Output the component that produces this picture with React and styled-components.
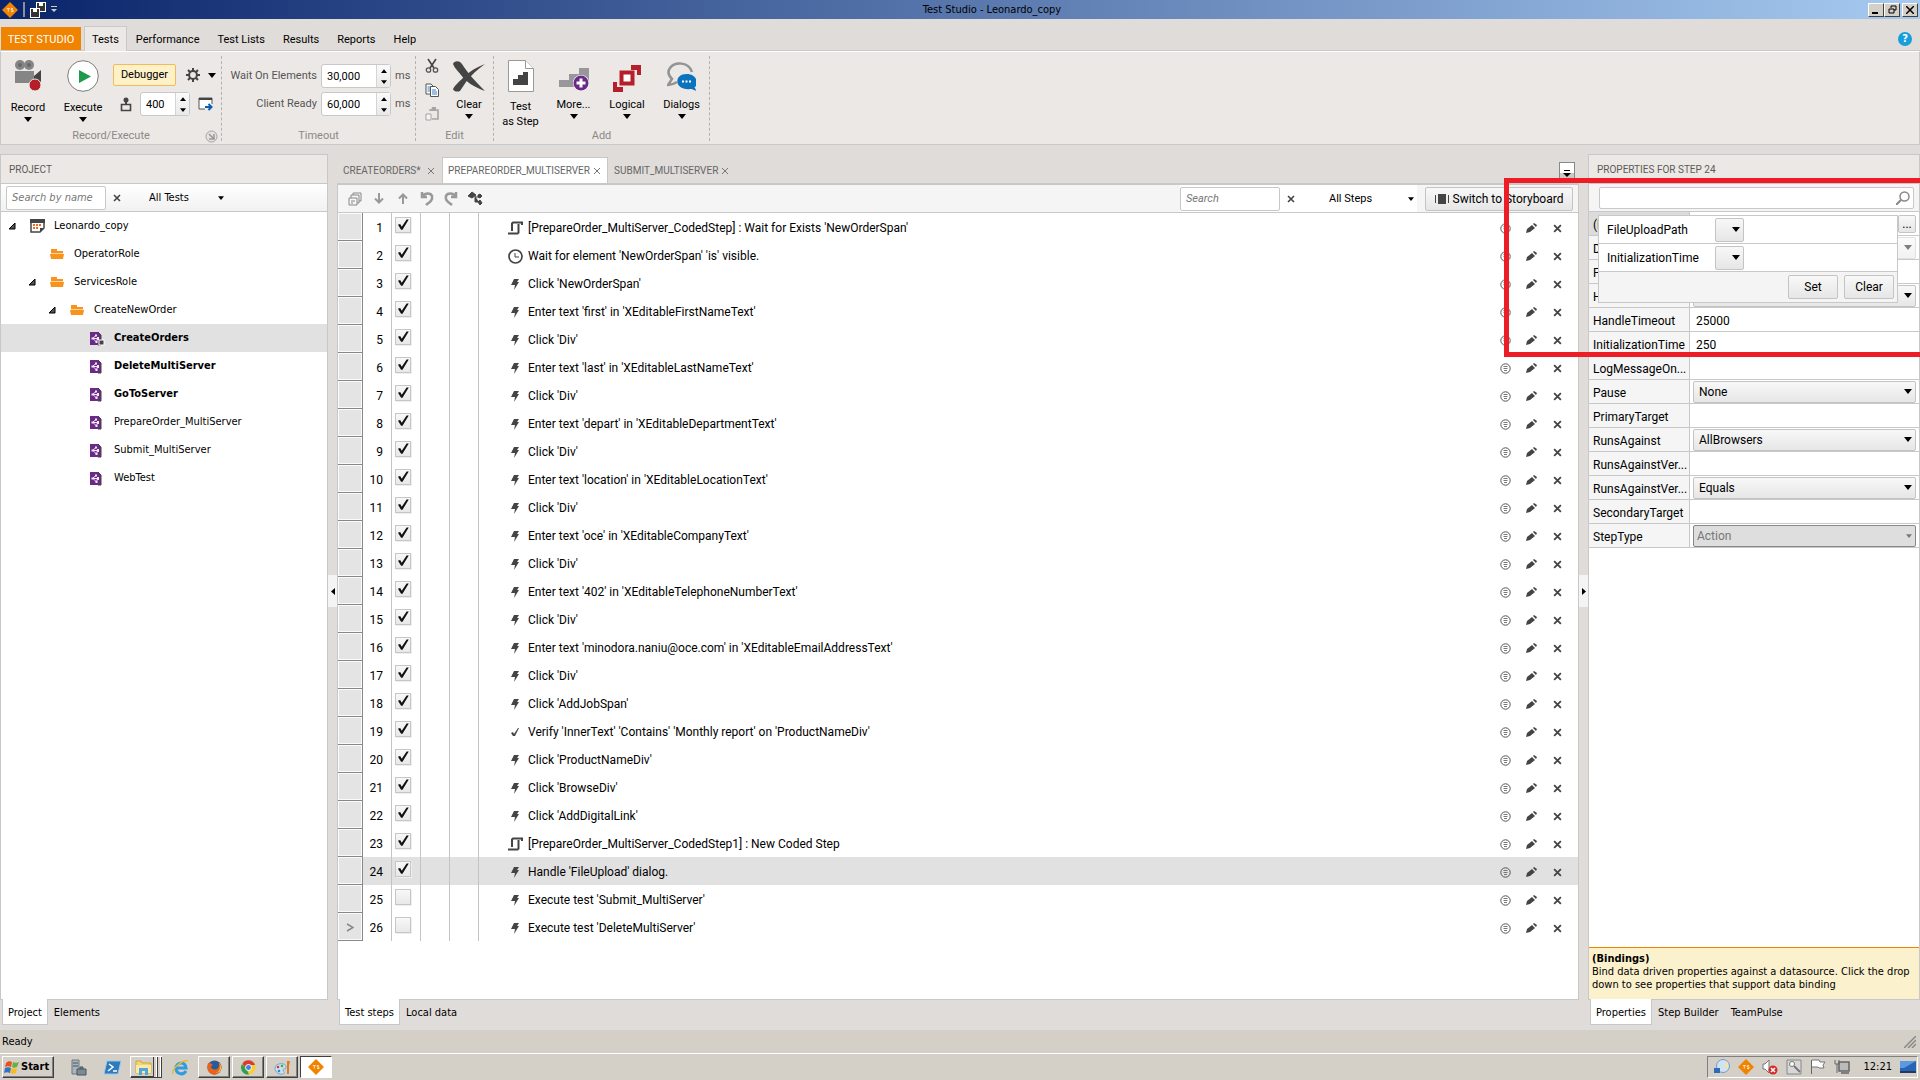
import { useState } from 'react';
import styled, { createGlobalStyle, css } from 'styled-components';

const ui = '"DejaVu Sans Condensed", "DejaVu Sans", sans-serif';
const ribbon = 'Roboto, "Open Sans", sans-serif';

const tree = [
  { name: 'Leonardo_copy', level: 0, icon: 'project', open: true },
  { name: 'OperatorRole', level: 1, icon: 'folder' },
  { name: 'ServicesRole', level: 1, icon: 'folder', open: true },
  { name: 'CreateNewOrder', level: 2, icon: 'folder', open: true },
  { name: 'CreateOrders', level: 3, icon: 'testdata', bold: true, selected: true },
  { name: 'DeleteMultiServer', level: 3, icon: 'test', bold: true },
  { name: 'GoToServer', level: 3, icon: 'test', bold: true },
  { name: 'PrepareOrder_MultiServer', level: 3, icon: 'test' },
  { name: 'Submit_MultiServer', level: 3, icon: 'test' },
  { name: 'WebTest', level: 3, icon: 'test' },
];

const steps = [
  { text: "[PrepareOrder_MultiServer_CodedStep] : Wait for Exists 'NewOrderSpan'", icon: 'code' },
  { text: "Wait for element 'NewOrderSpan' 'is' visible.", icon: 'clock' },
  { text: "Click 'NewOrderSpan'" },
  { text: "Enter text 'first' in 'XEditableFirstNameText'" },
  { text: "Click 'Div'" },
  { text: "Enter text 'last' in 'XEditableLastNameText'" },
  { text: "Click 'Div'" },
  { text: "Enter text 'depart' in 'XEditableDepartmentText'" },
  { text: "Click 'Div'" },
  { text: "Enter text 'location' in 'XEditableLocationText'" },
  { text: "Click 'Div'" },
  { text: "Enter text 'oce' in 'XEditableCompanyText'" },
  { text: "Click 'Div'" },
  { text: "Enter text '402' in 'XEditableTelephoneNumberText'" },
  { text: "Click 'Div'" },
  { text: "Enter text 'minodora.naniu@oce.com' in 'XEditableEmailAddressText'" },
  { text: "Click 'Div'" },
  { text: "Click 'AddJobSpan'" },
  { text: "Verify 'InnerText' 'Contains' 'Monthly report' on 'ProductNameDiv'", icon: 'verify' },
  { text: "Click 'ProductNameDiv'" },
  { text: "Click 'BrowseDiv'" },
  { text: "Click 'AddDigitalLink'" },
  { text: '[PrepareOrder_MultiServer_CodedStep1] : New Coded Step', icon: 'code' },
  { text: "Handle 'FileUpload' dialog.", selected: true },
  { text: "Execute test 'Submit_MultiServer'", off: true },
  { text: "Execute test 'DeleteMultiServer'", off: true, current: true },
];

const properties = [
  { name: '(Bindings)', kind: 'more', selected: true },
  { name: 'Description', kind: 'faded' },
  { name: 'FileUploadPath' },
  { name: 'HandleButton', kind: 'select', value: '' },
  { name: 'HandleTimeout', value: '25000' },
  { name: 'InitializationTime', value: '250' },
  { name: 'LogMessageOn...' },
  { name: 'Pause', kind: 'select', value: 'None' },
  { name: 'PrimaryTarget' },
  { name: 'RunsAgainst', kind: 'select', value: 'AllBrowsers' },
  { name: 'RunsAgainstVer...' },
  { name: 'RunsAgainstVer...', kind: 'select', value: 'Equals' },
  { name: 'SecondaryTarget' },
  { name: 'StepType', kind: 'disabled', value: 'Action' },
];

//GLOBAL + SHARED
const GlobalStyle = createGlobalStyle`
  * { box-sizing: border-box; }
  body { margin: 0; background: #e0dcd9; }
  button, input, select { font: inherit; color: inherit; margin: 0; }
  button { padding: 0; border: 0; background: none; }
  svg { display: block; flex: none; }
`;

const Window = styled.div`
  display: flex;
  flex-direction: column;
  min-height: 100vh;
  overflow: hidden;
  font: 11px/14px ${ui};
  color: #000;
`;

const Row = styled.div`
  display: flex;
  align-items: center;
  gap: ${(props) => props.$gap || 0}px;
`;

const raised = css`
  border: 1px solid #c4c4c4;
  border-radius: 2px;
  background: linear-gradient(#f8f8f8, #e6e6e6);
`;

//TITLE BAR
const TitleBar = styled.header`
  display: flex;
  align-items: center;
  height: 19px;
  background: linear-gradient(90deg, #0a246a, #a6caf0);
`;

const QuickAccess = styled.div`
  display: flex;
  align-items: center;
  gap: 5px;
  width: 64px;
  padding-left: 2px;
`;

const QuickLine = styled.span`
  width: 2px;
  height: 15px;
  background: #8a8f9e;
`;

const WindowTitle = styled.h1`
  flex: 1;
  margin: 0;
  padding-left: 52px;
  text-align: center;
  font: 11px/22px ${ui};
`;

const WindowButtons = styled.div`
  display: flex;
  width: 52px;
  button {
    display: grid;
    place-items: center;
    width: 16px;
    height: 14px;
    background: #d4d0c8;
    border: 1px solid;
    border-color: #fff #404040 #404040 #fff;
  }
  button:last-child { margin-left: 2px; }
`;

//RIBBON
const TabStrip = styled.nav`
  display: flex;
  align-items: flex-end;
  height: 32px;
  padding-left: 1px;
  border-bottom: 1px solid #c9c9c9;
  font: 11px/22px ${ribbon};
`;

const FileTab = styled.button`
  width: 80px;
  height: 23px;
  margin-right: 3px;
  padding-top: 2px;
  background: #f08300;
  color: #fff;
`;

const RibbonTab = styled.button`
  height: 24px;
  padding: 3px 9px 0;
  ${(props) => props.$active && css`
    height: 25px;
    margin-bottom: -1px;
    padding: 1px 7px 0;
    background: #ece8e5;
    border: 1px solid #c9c9c9;
    border-bottom: 0;
  `}
`;

const HelpButton = styled.button`
  display: grid;
  place-items: center;
  width: 14px;
  height: 14px;
  margin: 0 8px 4px auto;
  border-radius: 50%;
  background: #169fdb;
  color: #fff;
  font: bold 11px/14px ${ui};
`;

const Ribbon = styled.section`
  display: flex;
  height: 94px;
  padding: 4px 0 3px;
  background: #ece8e5;
  border: 1px solid #c9c9c9;
  border-top-color: #fff;
  font: 11px/16px ${ribbon};
`;

const Group = styled.div`
  display: flex;
  flex-direction: column;
  width: ${(props) => props.$width}px;
  border-right: 1px dashed #b4b1ae;
`;

const GroupBody = styled.div`
  display: flex;
  flex: 1;
  min-height: 0;
  gap: ${(props) => props.$gap || 0}px;
  padding-left: ${(props) => props.$left || 0}px;
`;

const GroupLabel = styled.div`
  position: relative;
  text-align: center;
  line-height: 11px;
  color: #8b8886;
`;

const Launcher = styled.button`
  position: absolute;
  right: 3px;
  top: 0;
`;

const BigButton = styled.button`
  display: flex;
  flex-direction: column;
  align-items: center;
  justify-content: flex-start;
  width: ${(props) => props.$width}px;
  padding-top: ${(props) => props.$top || 4}px;
  line-height: ${(props) => props.$line || 18}px;
  svg:first-child { margin-bottom: ${(props) => props.$space || 4}px; }
`;

const Tools = styled.div`
  display: flex;
  flex-direction: column;
  gap: ${(props) => props.$gap}px;
  padding-top: ${(props) => props.$top || 8}px;
`;

const Debugger = styled.button`
  width: 63px;
  height: 22px;
  margin: 0 10px 0 2px;
  border: 1px solid #f5b95c;
  border-radius: 2px;
  background: #fdf1c8;
`;

const SpinBox = styled.div`
  display: flex;
  width: ${(props) => props.$width}px;
  height: 24px;
  border: 1px solid #c8c8c8;
  border-radius: 3px;
  background: #fff;
  input {
    flex: 1;
    min-width: 0;
    border: 0;
    padding: 2px 5px 0;
    background: none;
    outline: 0;
  }
`;

const SpinButtons = styled.div`
  display: flex;
  flex-direction: column;
  width: 14px;
  background: linear-gradient(#fafafa, #e9e9e9);
  border-left: 1px solid #d4d4d4;
  button {
    flex: 1;
    display: grid;
    place-items: center;
  }
`;

const TimeRow = styled.div`
  display: flex;
  align-items: center;
  gap: 4px;
  color: #555;
  label { width: 91px; text-align: right; }
  input { color: #000; }
`;

//WORKSPACE
const Workspace = styled.main`
  display: grid;
  grid-template-columns: 328px minmax(0, 1fr) 332px;
  gap: 9px;
  flex: 1;
  padding-top: 9px;
`;

const Column = styled.section`
  position: relative;
  display: flex;
  flex-direction: column;
  min-width: 0;
`;

const Panel = styled.div`
  display: flex;
  flex-direction: column;
  flex: 1;
  background: #fff;
  border: 1px solid #c8c8c8;
`;

const PanelHeader = styled.h2`
  height: 29px;
  margin: 0;
  padding-left: 8px;
  background: #ece8e5;
  border-bottom: 1px solid #c8c8c8;
  font: 10px/30px ${ribbon};
  color: #5c5a58;
`;

const FilterBar = styled.div`
  display: flex;
  align-items: center;
  height: 28px;
  padding: 0 5px;
  background: ${(props) => props.$plain || 'linear-gradient(#fff, #f1f1f1)'};
  border-bottom: 1px solid #c8c8c8;
  font-family: ${(props) => (props.$ribbon ? ribbon : ui)};
`;

const SearchBox = styled.input`
  width: 100px;
  height: 24px;
  padding: 0 5px;
  border: 1px solid #c8c8c8;
  border-radius: 2px;
  background: #fff;
  outline: 0;
  &::placeholder { color: #777; opacity: 1; font-style: italic; }
`;

const ClearSearch = styled.button`
  display: grid;
  place-items: center;
  width: 22px;
  height: 22px;
`;

const Picker = styled.div`
  display: grid;
  align-items: center;
  width: ${(props) => props.$width};
  height: ${(props) => props.$height || 22}px;
  ${(props) => props.$boxed && raised}
  ${(props) => props.$disabled && css`
    background: #dedede;
    border: 1px solid #888;
    color: #777;
  `}
  opacity: ${(props) => (props.$faded ? 0.5 : 1)};
  select {
    grid-area: 1 / 1;
    width: 100%;
    height: 100%;
    padding: 0 ${(props) => props.$pad || 0}px;
    appearance: none;
    border: 0;
    background: none;
    outline: 0;
    opacity: 1;
  }
  svg {
    grid-area: 1 / 1;
    justify-self: end;
    margin-right: 3px;
    pointer-events: none;
  }
`;

const BottomTabs = styled.div`
  display: flex;
  height: 30px;
  padding-left: 2px;
`;

const BottomTab = styled.button`
  height: 25px;
  padding: 2px 5px 0;
  border: 1px solid transparent;
  border-top: 0;
  ${(props) => props.$active && css`
    position: relative;
    height: 26px;
    margin-top: -1px;
    background: #fff;
    border-color: #c8c8c8;
  `}
`;

const TreeItem = styled.div`
  display: flex;
  align-items: center;
  height: 28px;
  padding-left: ${(props) => 7 + props.$level * 20}px;
  background: ${(props) => (props.$selected ? '#e1e1e1' : 'none')};
  font-weight: ${(props) => (props.$bold ? 'bold' : 'normal')};
`;

const Expander = styled.span`
  width: 22px;
`;

const TreeIcon = styled.span`
  width: 24px;
`;

const SplitHandle = styled.button`
  position: absolute;
  top: 421px;
  ${(props) => props.$side}: -9px;
  display: grid;
  place-items: center;
  width: 9px;
  height: 32px;
  background: #f4f4f4;
`;

//DOCUMENT
const DocTabs = styled.div`
  display: flex;
  align-items: flex-end;
  height: 30px;
  border-bottom: 1px solid #c8c8c8;
  font: 10px/24px ${ribbon};
  color: #666;
`;

const DocTab = styled.button`
  display: flex;
  align-items: center;
  justify-content: space-between;
  width: ${(props) => props.$width}px;
  height: 26px;
  padding: 0 6px 0 5px;
  border: 1px solid transparent;
  border-bottom: 0;
  ${(props) => props.$active && css`
    background: #fff;
    border-color: #c8c8c8;
  `}
`;

const TabMenu = styled.button`
  display: grid;
  place-items: center;
  width: 16px;
  height: 21px;
  margin: 0 4px 0 auto;
  border: 1px solid #888;
  border-bottom: 0;
  background: linear-gradient(#fff 50%, #c9c9c9 50%);
`;

const ToolBar = styled.div`
  display: flex;
`;

const ToolIcon = styled.button`
  display: grid;
  place-items: center;
  width: 24px;
  height: 24px;
`;

const Filters = styled.div`
  display: flex;
  align-items: center;
  width: 237px;
  height: 27px;
  margin: 0 8px 0 auto;
  background: #fff;
`;

const Storyboard = styled.button`
  ${raised}
  display: flex;
  align-items: center;
  justify-content: center;
  gap: 4px;
  width: 148px;
  height: 24px;
  font: 12px/20px ${ribbon};
`;

const StepTable = styled.table`
  width: 100%;
  table-layout: fixed;
  border-spacing: 0;
  font: 12px/16px ${ribbon};
  td, th { height: 28px; padding: 2px 0 0; font-weight: normal; }
`;

const StepRow = styled.tr`
  background: ${(props) => (props.$selected ? '#e1e1e1' : 'none')};
`;

const RowHead = styled.th`
  background: #e4e4e4;
  border-right: 1px solid #888;
  border-bottom: 1px solid #888;
  box-shadow: inset 0 0 0 1px #fbfbfb;
  svg { margin: auto; }
`;

const NumberCell = styled.td`
  text-align: right;
  border-right: 1px solid #c4c4c4;
  && { padding-right: 8px; }
`;

const LineCell = styled.td`
  border-right: 1px solid #c4c4c4;
`;

const Tick = styled.input`
  display: block;
  appearance: none;
  width: 16px;
  height: 16px;
  margin: 0 0 6px 3px;
  border: 1px solid #c6c6c6;
  background: linear-gradient(#f8f8f8, #e8e8e8);
  box-shadow: 1px 1px 0 #eee;
  &:checked::after {
    content: '';
    display: block;
    width: 12px;
    height: 12px;
    margin: 1px;
    background: #111;
    clip-path: polygon(8% 48%, 26% 42%, 40% 64%, 80% 4%, 98% 4%, 46% 90%, 34% 90%);
  }
`;

const StepIcon = styled.span`
  display: grid;
  place-items: center;
  width: 16px;
  margin: 0 5px 0 auto;
`;

const RowAction = styled.button`
  display: grid;
  place-items: center;
  width: 26px;
  height: 24px;
`;

//PROPERTIES
const PropertySearch = styled.div`
  display: flex;
  align-items: center;
  flex: 1;
  height: 22px;
  margin-left: 5px;
  padding-right: 3px;
  border: 1px solid #c8c8c8;
  border-radius: 2px;
  background: #fff;
  input { flex: 1; border: 0; outline: 0; background: none; }
`;

const PropertyTable = styled.table`
  width: 100%;
  table-layout: fixed;
  border-spacing: 0;
  font: 12px/16px ${ribbon};
`;

const PropertyName = styled.th`
  height: 24px;
  padding: 2px 0 0 4px;
  text-align: left;
  font-weight: normal;
  white-space: nowrap;
  background: ${(props) => (props.$selected ? '#dcdcdc' : '#f5f5f5')};
  border-right: 1px solid #c8c8c8;
  border-bottom: 1px solid #c8c8c8;
`;

const PropertyValue = styled.td`
  padding: 0 3px;
  border-bottom: 1px solid #c8c8c8;
`;

const PropertyInput = styled.input`
  display: block;
  width: 100%;
  height: 20px;
  padding: 2px 3px 0;
  border: 0;
  outline: 0;
  background: none;
`;

const MoreButton = styled.button`
  ${raised}
  display: block;
  width: 18px;
  height: 18px;
  margin-left: auto;
  line-height: 14px;
`;

const Popup = styled.div`
  position: absolute;
  z-index: 1;
  left: 10px;
  top: 61px;
  width: 300px;
  background: #fff;
  border: 1px solid #c8c8c8;
  font: 12px/16px ${ribbon};
`;

const BindingRow = styled.div`
  display: grid;
  grid-template-columns: 108px 29px;
  align-items: center;
  height: 28px;
  padding-left: 8px;
  border-bottom: 1px solid #c8c8c8;
`;

const PopupFooter = styled.div`
  display: flex;
  justify-content: flex-end;
  align-items: center;
  gap: 6px;
  height: 30px;
  padding-right: 3px;
  background: #f4f4f4;
`;

const PopupButton = styled.button`
  ${raised}
  width: 50px;
  height: 24px;
`;

const Highlight = styled.div`
  position: absolute;
  z-index: 2;
  left: -84px;
  right: 0;
  top: 24px;
  height: 179px;
  border: 5px solid #ee1c24;
  border-right: 0;
  pointer-events: none;
`;

const Hint = styled.div`
  height: 52px;
  margin-top: auto;
  padding: 4px 4px 0 3px;
  background: #fcf1cd;
  border-top: 1px solid #f08300;
  line-height: 13px;
`;

//STATUS + TASKBAR
const StatusBar = styled.footer`
  display: flex;
  align-items: center;
  justify-content: space-between;
  height: 23px;
  padding: 0 4px 0 2px;
  background: #d4d0c8;
`;

const TaskBar = styled.footer`
  display: flex;
  align-items: center;
  height: 27px;
  padding: 0 2px;
  background: #d4d0c8;
  border-top: 1px solid #fff;
`;

const taskEdge = css`
  border: 1px solid;
  border-color: #fff #404040 #404040 #fff;
  box-shadow: inset -1px -1px 0 #808080;
`;

const Start = styled.button`
  ${taskEdge}
  display: flex;
  align-items: center;
  width: 52px;
  height: 22px;
  margin-right: 6px;
  padding-left: 1px;
  font-weight: bold;
`;

const TaskButton = styled.button`
  display: grid;
  place-items: center;
  width: 32px;
  height: 22px;
  margin-left: 2px;
  ${(props) => props.$raised && taskEdge}
  ${(props) => props.$active && css`
    background: #fff;
    border: 1px solid;
    border-color: #404040 #fff #fff #404040;
  `}
  ${(props) => props.$stacked && css`
    border-right: 0;
    box-shadow: inset -1px 0 0 #404040, inset -2px 0 0 #fff, inset -4px 0 0 #d4d0c8, inset -5px 0 0 #404040, inset -6px 0 0 #fff, inset -8px 0 0 #d4d0c8, inset -9px 0 0 #404040, inset 0 -1px 0 #404040;
    padding-right: 7px;
  `}
`;

const Tray = styled.div`
  display: flex;
  align-items: center;
  gap: 8px;
  height: 22px;
  margin-left: auto;
  padding: 0 1px 0 6px;
  border: 1px solid;
  border-color: #808080 #fff #fff #808080;
`;

const Clock = styled.time`
  margin-left: 5px;
`;

//ICONS
const Arrow = ({ up, small, color = '#000' }) => (
  <svg width={small ? 6 : 8} height={small ? 4 : 5} viewBox="0 0 8 5">
    <path d={up ? 'M0 5h8L4 0z' : 'M0 0h8L4 5z'} fill={color} />
  </svg>
);

const Cross = ({ size = 8, thin }) => (
  <svg width={size} height={size} viewBox="0 0 8 8">
    <path d="M1 1l6 6M7 1L1 7" stroke={thin ? '#777' : '#444'} strokeWidth={thin ? 1 : 1.6} fill="none" />
  </svg>
);

const Diamond = ({ size = 16 }) => (
  <svg width={size} height={size} viewBox="0 0 16 16">
    <path d="M8 0l8 8-8 8-8-8z" fill="#f08300" />
    <path d="M4.8 6.6h3M6.3 6.6v3M11 6.6H9.2v1.4H11v1.6H9" stroke="#fbe3c4" fill="none" />
  </svg>
);

const SaveAll = () => (
  <svg width="16" height="16" viewBox="0 0 16 16">
    <path d="M6 0h10v10H6z" fill="#fff" />
    <path d="M7 1h8v8H7z" fill="#333" />
    <path d="M9 1h4v3H9z" fill="#fff" />
    <path d="M0 6h10v10H0z" fill="#fff" />
    <path d="M1 7h8v8H1z" fill="#333" />
    <path d="M3 7h4v3H3z" fill="#fff" />
  </svg>
);

const RecordIcon = () => (
  <svg width="28" height="32" viewBox="0 0 28 32">
    <circle cx="6" cy="5" r="5" fill="#858585" />
    <circle cx="15" cy="5" r="5" fill="#858585" />
    <circle cx="6" cy="5" r="2" fill="#686868" />
    <circle cx="15" cy="5" r="2" fill="#686868" />
    <path d="M1 11h19v12H1z" fill="#858585" />
    <path d="M20 16l7-6v12l-7-2z" fill="#444" />
    <circle cx="21" cy="25" r="6" fill="#b51f2a" stroke="#ece8e5" />
  </svg>
);

const PlayIcon = () => (
  <svg width="34" height="32" viewBox="0 0 34 32">
    <circle cx="17" cy="16" r="15.3" fill="#fff" stroke="#7d7d7d" />
    <path d="M13 10v13l12-6.5z" fill="#1f9a4c" />
  </svg>
);

const Gear = () => (
  <svg width="14" height="14" viewBox="0 0 14 14">
    <circle cx="7" cy="7" r="3.9" fill="none" stroke="#444" strokeWidth="2" />
    <path d="M7 0v3M7 11v3M0 7h3M11 7h3M2 2l2 2M10 10l2 2M12 2l-2 2M4 10l-2 2" stroke="#444" strokeWidth="2" />
  </svg>
);

const Slow = () => (
  <svg width="12" height="15" viewBox="0 0 12 15">
    <circle cx="6" cy="3" r="2.5" fill="#444" />
    <path d="M5 4h2v4H5z" fill="#444" />
    <path d="M1.5 7.5h9v6h-9z" fill="none" stroke="#444" strokeWidth="1.6" />
  </svg>
);

const DockWindow = () => (
  <svg width="15" height="14" viewBox="0 0 15 14">
    <path d="M7 12H1V1h13v6" fill="#fff" stroke="#555" />
    <path d="M1 1h13v2H1z" fill="#444" />
    <path d="M7 10h6M10.500 7l3 3-3 3" stroke="#0a5eb0" strokeWidth="2" fill="none" />
  </svg>
);

const LauncherIcon = () => (
  <svg width="13" height="13" viewBox="0 0 13 13">
    <circle cx="6.500" cy="6.500" r="5.500" fill="#e5e2df" stroke="#a5a3a1" />
    <path d="M4 4l5 5M9 4v5H4" stroke="#999" strokeWidth="1.500" fill="none" />
  </svg>
);

const Scissors = () => (
  <svg width="14" height="16" viewBox="0 0 14 16">
    <path d="M3 1l6 9M11 1L5 10" stroke="#444" strokeWidth="1.600" />
    <circle cx="3.500" cy="12" r="2.200" fill="none" stroke="#555" strokeWidth="1.300" />
    <circle cx="10.500" cy="12" r="2.200" fill="none" stroke="#555" strokeWidth="1.300" />
  </svg>
);

const CopyIcon = () => (
  <svg width="14" height="15" viewBox="0 0 14 15">
    <path d="M1 1h5l2 2v8H1z" fill="#fff" stroke="#555" />
    <path d="M2.500 4h3M2.500 6h3M2.500 8h3" stroke="#3b7fc0" />
    <path d="M5.500 3.500h5l3 3v7h-8z" fill="#fff" stroke="#555" />
    <path d="M7 7h4M7 9h5M7 11h5" stroke="#3b7fc0" />
  </svg>
);

const PasteIcon = () => (
  <svg width="14" height="14" viewBox="0 0 14 14">
    <path d="M5 4V3h8v9H7" fill="none" stroke="#a5a5a5" strokeWidth="1.600" />
    <path d="M7 0h4v4H6z" fill="#a5a5a5" />
    <path d="M1 7h5v6H1z" fill="#f5f5f5" stroke="#a5a5a5" />
  </svg>
);

const ClearIcon = () => (
  <svg width="32" height="32" viewBox="0 0 32 32">
    <path d="M0 4C1 1 6 0 9 4c5 8 12 16 23 27-11-4-19-9-24-16C6 12 2 9 0 4z" fill="#444" />
    <path d="M32 4C25 9 18 15 13 22c-2 3-4 6-6 9-2 1-6 1-7-2 2-4 8-9 12-13C17 11 24 7 32 4z" fill="#444" />
  </svg>
);

const TestStepIcon = () => (
  <svg width="26" height="32" viewBox="0 0 26 32">
    <path d="M.5.500h17l8 8v23H.5z" fill="#fff" stroke="#999" />
    <path d="M17.500.500v8h8" fill="#fff" stroke="#999" />
    <path d="M5 25v-6h5v-4h5v-3h5v13z" fill="#444" />
  </svg>
);

const MoreIcon = () => (
  <svg width="32" height="24" viewBox="0 0 32 24">
    <path d="M1 12h10V6h10V0h10v15H21v4H1z" fill="#98989c" />
    <circle cx="23" cy="15" r="8" fill="#fff" />
    <circle cx="23" cy="15" r="7.500" fill="#6a2a85" />
    <path d="M23 10.500v9M18.500 15h9" stroke="#fff" strokeWidth="3" />
  </svg>
);

const LogicalIcon = () => (
  <svg width="28" height="27" viewBox="0 0 28 27">
    <path d="M18 0h10v10h-4V5h-6z" fill="#b51f2a" />
    <path d="M0 17h4v5h6v5H0z" fill="#b51f2a" />
    <path d="M8.500 7.500h11v11h-11z" fill="#fff" stroke="#b51f2a" strokeWidth="4" />
  </svg>
);

const DialogIcon = () => (
  <svg width="29" height="30" viewBox="0 0 29 30">
    <path d="M25 10C22 0 8-1 3 6c-3 4-1 8 2 11l-4 6c4 0 6-1 9-3" fill="none" stroke="#939393" strokeWidth="2.500" />
    <path d="M19.500 12c12 0 12 12 8 13l2 4-5-2c-18 2-18-15-5-15z" fill="#0b72bd" />
    <path d="M15 19.500h2M18.500 19.500h2M22 19.500h2" stroke="#fff" strokeWidth="2" />
  </svg>
);

const TreeGlyph = ({ kind }) => {
  if (kind === 'folder') {
    return (
      <svg width="14" height="12" viewBox="0 0 14 12">
        <path d="M1 1h6v2h6v3H1z" fill="#f7941d" />
        <path d="M0 6h14l-1 5H1z" fill="#f7941d" />
        <path d="M1 5.500h12" stroke="#fcd39b" />
      </svg>
    );
  }
  if (kind === 'project') {
    return (
      <svg width="15" height="14" viewBox="0 0 15 14">
        <path d="M1 1h13v8l-4 4H1z" fill="#fff" stroke="#444" strokeWidth="1.500" />
        <path d="M0 0h15v4H0zM10 13V9h4z" fill="#444" />
        <path d="M3 6h2M6 6h2M9 6h2M3 9h2M6 9h2" stroke="#f26a21" strokeWidth="2" />
      </svg>
    );
  }
  return (
    <svg width="15" height="15" viewBox="0 0 15 15">
      <path d="M0 1h8l3 3v10H0z" fill="#6a2a85" />
      <path d="M8 1l3 3v10H8" fill="none" stroke="#444" />
      <path d="M6 4.500L2.500 7.500h5l-1 3.500-3-3" fill="none" stroke="#f4eaf7" />
      <path d="M5 3.500h2v2H5zM1.500 6.500h2v2h-2zM7 6h2v3H7zM5.500 10h2v2h-2z" fill="#f4eaf7" />
      {kind === 'testdata' && <path d="M9 9h5v5H9z" fill="#444" stroke="#fff" />}
    </svg>
  );
};

const StepGlyph = ({ kind }) => {
  if (kind === 'code') {
    return (
      <svg width="15" height="14" viewBox="0 0 15 14">
        <path d="M4 10V2.500L5 1.500h9V4M10.500 3v8.500L9.500 12.500H0" fill="none" stroke="#444" strokeWidth="2" />
      </svg>
    );
  }
  if (kind === 'clock') {
    return (
      <svg width="15" height="15" viewBox="0 0 15 15">
        <circle cx="7.500" cy="7.500" r="6.500" fill="none" stroke="#444" strokeWidth="1.700" />
        <path d="M7 4v4h4" fill="none" stroke="#444" />
      </svg>
    );
  }
  if (kind === 'verify') {
    return (
      <svg width="10" height="10" viewBox="0 0 10 10">
        <path d="M1 6l2-1 1 2 4-6h1L5 9H3z" fill="#444" />
      </svg>
    );
  }
  return (
    <svg width="10" height="11" viewBox="0 0 10 11">
      <path d="M4 0h5L7 3h2L4 11l1-5H1z" fill="#444" />
    </svg>
  );
};

const Comment = () => (
  <svg width="11" height="11" viewBox="0 0 11 11">
    <circle cx="5.500" cy="5.500" r="4.700" fill="none" stroke="#555" />
    <path d="M3.500 3.500h4M3.500 5.500h4M4 7.500h3" stroke="#777" />
  </svg>
);

const Pencil = () => (
  <svg width="11" height="10" viewBox="0 0 11 10">
    <path d="M0 10l1-4 5-4 3 3-5 4zM7 1l1-1 3 2-1 2z" fill="#444" />
  </svg>
);

const toolGlyphs = {
  'Copy view': <path d="M1 7h8v7H1zM3 7V4h8v8H9M5 4V2h8v8h-2M3 10h4M3 12h2" fill="none" stroke="#888" />,
  'Move down': <path d="M7 2v9M3 7.500l4 4 4-4" fill="none" stroke="#999" strokeWidth="2" />,
  'Move up': <path d="M7 13V4M3 7.500l4-4 4 4" fill="none" stroke="#999" strokeWidth="2" />,
  Undo: <path d="M2 1v5h5M2 6c3-5 9-4 10-1 1 4-2 6-6 9" fill="none" stroke="#999" strokeWidth="2.500" />,
  Redo: <path d="M12 1v5H7M12 6C9 1 3 2 2 5c-1 4 2 6 6 9" fill="none" stroke="#999" strokeWidth="2.500" />,
  Locate: <path d="M0 5l4-4 4 3-4 3zM7 5v6h4M8 6h3M10 4l2-1 2 2-2 2-2-1zM10 11l2-2 2 3-2 2z" fill="#444" stroke="#444" />,
};

const Paint = ({ children }) => <svg width="17" height="17" viewBox="0 0 17 17">{children}</svg>;

const WindowsFlag = () => (
  <Paint>
    <path d="M2 4c2-2 4-2 6-1L7 8C5 7 3 7 1 8z" fill="#e8501f" />
    <path d="M9 3c2 1 4 1 6 0l-2 5c-2 1-4 1-5 0z" fill="#67b044" />
    <path d="M1 9c2-1 4-1 6 0l-1 5c-2-1-4-1-6 0z" fill="#2f74c6" />
    <path d="M8 9c2 1 4 1 5 0l-1 5c-2 1-4 1-6 0z" fill="#f8bc20" />
  </Paint>
);

const Spinner = ({ id, value, width }) => (
  <SpinBox $width={width}>
    <input id={id} aria-label={id} defaultValue={value} />
    <SpinButtons>
      <button aria-label="Increase"><Arrow up small /></button>
      <button aria-label="Decrease"><Arrow small /></button>
    </SpinButtons>
  </SpinBox>
);

const AppRibbon = () => (
  <>
    <TabStrip>
      <FileTab>TEST STUDIO</FileTab>
      <RibbonTab $active>Tests</RibbonTab>
      <RibbonTab>Performance</RibbonTab>
      <RibbonTab>Test Lists</RibbonTab>
      <RibbonTab>Results</RibbonTab>
      <RibbonTab>Reports</RibbonTab>
      <RibbonTab>Help</RibbonTab>
      <HelpButton aria-label="Help">?</HelpButton>
    </TabStrip>
    <Ribbon>
      <Group $width={221}>
        <GroupBody>
          <BigButton $width={54} $space={7}><RecordIcon />Record<Arrow /></BigButton>
          <BigButton $width={56} $space={7}><PlayIcon />Execute<Arrow /></BigButton>
          <Tools $gap={6}>
            <Row><Debugger>Debugger</Debugger><Gear /><Row $gap={8}><span /><Arrow /></Row></Row>
            <Row $gap={8}><Row $gap={9}><span /><Slow /></Row><Spinner id="Speed" value="400" width={50} /><DockWindow /></Row>
          </Tools>
        </GroupBody>
        <GroupLabel>
          Record/Execute
          <Launcher aria-label="More settings"><LauncherIcon /></Launcher>
        </GroupLabel>
      </Group>
      <Group $width={194}>
        <GroupBody $left={4}>
          <Tools $gap={4}>
            <TimeRow><label htmlFor="wait">Wait On Elements</label><Spinner id="wait" value="30,000" width={70} />ms</TimeRow>
            <TimeRow><label htmlFor="ready">Client Ready</label><Spinner id="ready" value="60,000" width={70} />ms</TimeRow>
          </Tools>
        </GroupBody>
        <GroupLabel>Timeout</GroupLabel>
      </Group>
      <Group $width={78}>
        <GroupBody $left={9} $gap={6}>
          <Tools $gap={9} $top={2}>
            <button aria-label="Cut"><Scissors /></button>
            <button aria-label="Copy"><CopyIcon /></button>
            <button aria-label="Paste"><PasteIcon /></button>
          </Tools>
          <BigButton $width={48}><ClearIcon />Clear<Arrow /></BigButton>
        </GroupBody>
        <GroupLabel>Edit</GroupLabel>
      </Group>
      <Group $width={216}>
        <GroupBody>
          <BigButton $width={53} $line={15} $space={7}><TestStepIcon />Test<br />as Step</BigButton>
          <BigButton $width={53} $top={12}><MoreIcon />More...<Arrow /></BigButton>
          <BigButton $width={54} $top={9}><LogicalIcon />Logical<Arrow /></BigButton>
          <BigButton $width={55} $top={6}><DialogIcon />Dialogs<Arrow /></BigButton>
        </GroupBody>
        <GroupLabel>Add</GroupLabel>
      </Group>
    </Ribbon>
  </>
);

const ProjectColumn = () => (
  <Column>
    <Panel>
      <PanelHeader>PROJECT</PanelHeader>
      <FilterBar>
        <SearchBox aria-label="Search by name" placeholder="Search by name" />
        <ClearSearch aria-label="Clear search"><Cross /></ClearSearch>
        <Row $gap={21}>
          <span />
          <Picker $width="78px"><select aria-label="Filter"><option>All Tests</option></select><Arrow small /></Picker>
        </Row>
      </FilterBar>
      <div role="tree">
        {tree.map((item) => (
          <TreeItem key={item.name} role="treeitem" $level={item.level} $bold={item.bold} $selected={item.selected}>
            <Expander>
              {item.open && <svg width="8" height="8" viewBox="0 0 8 8"><path d="M1 7h6V1z" fill="#555" stroke="#000" /></svg>}
            </Expander>
            <TreeIcon><TreeGlyph kind={item.icon} /></TreeIcon>
            {item.name}
          </TreeItem>
        ))}
      </div>
    </Panel>
    <BottomTabs>
      <BottomTab $active>Project</BottomTab>
      <BottomTab>Elements</BottomTab>
    </BottomTabs>
    <SplitHandle $side="right" aria-label="Collapse project">
      <svg width="4" height="7" viewBox="0 0 4 7"><path d="M4 0v7L0 3.500z" /></svg>
    </SplitHandle>
  </Column>
);

const StepsColumn = () => {
  const [enabled, setEnabled] = useState(steps.map((step) => !step.off));

  const toggle = function (index) {
    setEnabled(enabled.map((on, i) => (i === index ? !on : on)));
  };

  return (
    <Column>
      <DocTabs>
        <DocTab $width={105}>CREATEORDERS* <Cross thin /></DocTab>
        <DocTab $width={166} $active>PREPAREORDER_MULTISERVER <Cross thin /></DocTab>
        <DocTab $width={128}>SUBMIT_MULTISERVER <Cross thin /></DocTab>
        <TabMenu aria-label="Open tests">
          <svg width="8" height="7" viewBox="0 0 8 7"><path d="M1 0h6v1H1zM0 3h8L4 7z" /></svg>
        </TabMenu>
      </DocTabs>
      <Panel>
        <FilterBar $plain="#f5f5f5" $ribbon>
          <ToolBar>
            {Object.keys(toolGlyphs).map((name) => (
              <ToolIcon key={name} aria-label={name}>
                <svg width="15" height="15" viewBox="0 0 15 15">{toolGlyphs[name]}</svg>
              </ToolIcon>
            ))}
          </ToolBar>
          <Filters>
            <SearchBox aria-label="Search steps" placeholder="Search" />
            <ClearSearch aria-label="Clear search"><Cross /></ClearSearch>
            <Row $gap={28}>
              <span />
              <Picker $width="88px"><select aria-label="Step filter"><option>All Steps</option></select><Arrow small /></Picker>
            </Row>
          </Filters>
          <Storyboard>
            <svg width="14" height="10" viewBox="0 0 14 10"><path d="M0 1h1v8H0zM13 1h1v8h-1zM3 0h8v10H3z" fill="#444" /></svg>
            Switch to Storyboard
          </Storyboard>
        </FilterBar>
        <StepTable>
          <colgroup>
            <col width="25" /><col width="29" /><col width="29" /><col width="29" /><col width="29" />
            <col width="49" /><col /><col width="26" /><col width="26" /><col width="34" />
          </colgroup>
          <tbody>
            {steps.map((step, index) => (
              <StepRow key={index} $selected={step.selected}>
                <RowHead>
                  {step.current && <svg width="8" height="9" viewBox="0 0 8 9"><path d="M1 1l6 3.500L1 8" fill="none" stroke="#888" strokeWidth="1.500" /></svg>}
                </RowHead>
                <NumberCell>{index + 1}</NumberCell>
                <LineCell>
                  <Tick type="checkbox" aria-label={'Step ' + (index + 1)} checked={enabled[index]} onChange={() => toggle(index)} />
                </LineCell>
                <LineCell />
                <LineCell />
                <td><StepIcon><StepGlyph kind={step.icon} /></StepIcon></td>
                <td>{step.text}</td>
                <td><RowAction aria-label="Comment"><Comment /></RowAction></td>
                <td><RowAction aria-label="Edit"><Pencil /></RowAction></td>
                <td><RowAction aria-label="Delete"><Cross size={9} /></RowAction></td>
              </StepRow>
            ))}
          </tbody>
        </StepTable>
      </Panel>
      <BottomTabs>
        <BottomTab $active>Test steps</BottomTab>
        <BottomTab>Local data</BottomTab>
      </BottomTabs>
    </Column>
  );
};

const PropertyEditor = ({ property }) => {
  const { kind, name, value } = property;
  if (kind === 'more') return <MoreButton aria-label="Edit bindings">...</MoreButton>;
  if (!kind) return <PropertyInput aria-label={name} defaultValue={value} />;
  const disabled = kind === 'disabled';
  return (
    <Picker $width="100%" $height={22} $boxed $pad={disabled ? 3 : 5} $disabled={disabled} $faded={kind === 'faded'}>
      <select aria-label={name} disabled={disabled}><option>{value}</option></select>
      <Arrow small={disabled} color={disabled ? '#777' : '#000'} />
    </Picker>
  );
};

const PropertiesColumn = () => (
  <Column>
    <Panel>
      <PanelHeader>PROPERTIES FOR STEP 24</PanelHeader>
      <FilterBar $plain="#f5f5f5">
        <PropertySearch>
          <input aria-label="Search properties" />
          <svg width="14" height="14" viewBox="0 0 14 14">
            <circle cx="8.500" cy="5.500" r="4.500" fill="none" stroke="#888" strokeWidth="1.500" />
            <path d="M5 9l-5 5" stroke="#888" strokeWidth="2" />
          </svg>
        </PropertySearch>
      </FilterBar>
      <PropertyTable>
        <colgroup><col width="101" /><col /></colgroup>
        <tbody>
          {properties.map((property, index) => (
            <tr key={index}>
              <PropertyName $selected={property.selected}>{property.name}</PropertyName>
              <PropertyValue><PropertyEditor property={property} /></PropertyValue>
            </tr>
          ))}
        </tbody>
      </PropertyTable>
      <Hint>
        <b>(Bindings)</b><br />
        Bind data driven properties against a datasource. Click the drop down to see properties that support data binding
      </Hint>
    </Panel>
    <BottomTabs>
      <BottomTab $active>Properties</BottomTab>
      <BottomTab>Step Builder</BottomTab>
      <BottomTab>TeamPulse</BottomTab>
    </BottomTabs>
    <SplitHandle $side="left" aria-label="Collapse properties">
      <svg width="4" height="7" viewBox="0 0 4 7"><path d="M0 0v7l4-3.500z" /></svg>
    </SplitHandle>
    <Popup>
      {['FileUploadPath', 'InitializationTime'].map((name) => (
        <BindingRow key={name}>
          <label htmlFor={name}>{name}</label>
          <Picker $width="29px" $height={24} $boxed><select id={name} defaultValue=""><option /></select><Arrow /></Picker>
        </BindingRow>
      ))}
      <PopupFooter>
        <PopupButton>Set</PopupButton>
        <PopupButton>Clear</PopupButton>
      </PopupFooter>
    </Popup>
    <Highlight />
  </Column>
);

const Taskbar = () => (
  <TaskBar>
    <Start><WindowsFlag />Start</Start>
    <TaskButton aria-label="Server Manager">
      <Paint>
        <path d="M2 1h7v14H2z" fill="#a9b4bd" stroke="#6d7880" />
        <path d="M3 4h5M3 7h5" stroke="#49545c" />
        <path d="M7 10h9v6H7zM10 10V8h3v2" fill="#7d8b96" stroke="#48545c" />
      </Paint>
    </TaskButton>
    <TaskButton aria-label="PowerShell">
      <Paint>
        <path d="M3 2h14l-3 13H0z" fill="#2c7bbd" stroke="#9cc8e6" />
        <path d="M5 5l4 3-5 4M9 12h4" fill="none" stroke="#fff" strokeWidth="1.500" />
      </Paint>
    </TaskButton>
    <TaskButton $raised $stacked aria-label="Explorer">
      <Paint>
        <path d="M1 2h5l1 2h9v10H1z" fill="#f3d673" stroke="#c9a640" />
        <path d="M1 6h15v8H1z" fill="#fbe9a5" />
        <path d="M4 16V9h9v7h-3v-4H7v4z" fill="#4fa7dc" />
      </Paint>
    </TaskButton>
    <TaskButton aria-label="Internet Explorer">
      <Paint>
        <path d="M14 12c-3 5-10 3-10-3s9-7 10 0H5" fill="none" stroke="#2e9ddf" strokeWidth="3" />
        <path d="M1 15C-1 11 10 0 16 2" fill="none" stroke="#efb72c" strokeWidth="1.500" />
      </Paint>
    </TaskButton>
    <TaskButton $raised aria-label="Firefox">
      <Paint>
        <circle cx="8.500" cy="8.500" r="7" fill="#285a9c" />
        <path d="M2 4c-4 12 10 16 13 6 1-4-1-6-2-7 1 5-2 9-6 7-3-1-2-4 0-4-2-2-4-2-5-2z" fill="#e8641b" />
        <path d="M13 4c2 4 1 8-3 10 5 0 7-6 3-10z" fill="#fbc02d" />
      </Paint>
    </TaskButton>
    <TaskButton $raised aria-label="Chrome">
      <Paint>
        <circle cx="8.500" cy="8.500" r="7" fill="#fbce2f" />
        <path d="M2.500 4.500A7 7 0 0 1 15 6H8L5 9z" fill="#dc3b2e" />
        <path d="M2 5l5 6 2 4.500A7 7 0 0 1 2 5z" fill="#2fa04e" />
        <circle cx="8.500" cy="8.500" r="3" fill="#3f83e4" stroke="#fff" />
      </Paint>
    </TaskButton>
    <TaskButton $raised aria-label="Paint">
      <Paint>
        <path d="M1 9c0-5 11-6 11-1 0 3-3 1-3 3s3 2 0 4c-4 1-8-2-8-6z" fill="#c9e3f4" stroke="#6fa5c8" />
        <circle cx="4" cy="8" r="1.300" fill="#d33" />
        <circle cx="8" cy="7" r="1.300" fill="#4a4" />
        <circle cx="5" cy="12" r="1.300" fill="#38c" />
        <path d="M13 2h3l-1 5v8h-2V7z" fill="#e07b1e" />
      </Paint>
    </TaskButton>
    <TaskButton $active aria-label="Test Studio"><Diamond /></TaskButton>
    <Tray>
      <svg width="16" height="16" viewBox="0 0 16 16">
        <circle cx="9" cy="7" r="6.500" fill="#cfe2f6" stroke="#7d98ba" />
        <path d="M9 7l5-4v6z" fill="#f4e6a0" />
        <path d="M0 9h6v5H0z" fill="#2c6cb8" />
      </svg>
      <Diamond />
      <svg width="16" height="16" viewBox="0 0 16 16">
        <path d="M1 5h2l4-4v13l-4-4H1z" fill="#fff" stroke="#777" />
        <circle cx="11" cy="11" r="4.500" fill="#d42b2b" />
        <path d="M9 9l4 4M13 9l-4 4" stroke="#fff" strokeWidth="1.500" />
      </svg>
      <svg width="16" height="16" viewBox="0 0 16 16">
        <path d="M1 1h14v14H1z" fill="#d7d7d7" stroke="#888" />
        <path d="M8 7l6 6" stroke="#777" strokeWidth="2" />
        <circle cx="6" cy="5" r="2.500" fill="#fff" stroke="#777" />
      </svg>
      <svg width="16" height="16" viewBox="0 0 16 16">
        <path d="M2 1h7l1 2h5l-2 3 1 3H9L8 8H2" fill="#fff" stroke="#777" />
        <path d="M1.500 1v14" stroke="#666" />
      </svg>
      <svg width="16" height="16" viewBox="0 0 16 16">
        <path d="M5 3h10v9H5zM7 14h8" fill="#bbb" stroke="#666" strokeWidth="1.500" />
        <path d="M1 1v4h4V1M3 5v9" fill="none" stroke="#666" />
      </svg>
      <Clock>12:21</Clock>
      <svg width="16" height="14" viewBox="0 0 16 14">
        <path d="M0 1h16v11H0z" fill="#2865b5" />
        <path d="M0 1h16L4 8H0z" fill="#5b9ae0" />
        <path d="M0 11h16v2H0z" fill="#223a60" />
      </svg>
    </Tray>
  </TaskBar>
);

function App() {
  return (
    <Window>
      <GlobalStyle />
      <TitleBar>
        <QuickAccess>
          <Diamond />
          <QuickLine />
          <SaveAll />
          <svg width="6" height="7" viewBox="0 0 6 7"><path d="M0 0h6v1H0zM0 3h6L3 6z" fill="#ccc" /></svg>
        </QuickAccess>
        <WindowTitle>Test Studio - Leonardo_copy</WindowTitle>
        <WindowButtons>
          <button aria-label="Minimize"><svg width="8" height="8"><path d="M0 6h6v2H0z" /></svg></button>
          <button aria-label="Restore">
            <svg width="9" height="9"><path d="M3 3V1h5v4H6M1 4h5v4H1z" fill="none" stroke="#000" /></svg>
          </button>
          <button aria-label="Close"><svg width="8" height="8"><path d="M0 0l8 8M8 0L0 8" stroke="#000" strokeWidth="1.500" /></svg></button>
        </WindowButtons>
      </TitleBar>
      <AppRibbon />
      <Workspace>
        <ProjectColumn />
        <StepsColumn />
        <PropertiesColumn />
      </Workspace>
      <StatusBar>
        Ready
        <svg width="12" height="12" viewBox="0 0 12 12"><path d="M0 12L12 0M4 12l8-8M8 12l4-4" stroke="#888" strokeWidth="1.500" /></svg>
      </StatusBar>
      <Taskbar />
    </Window>
  );
}

export default App;
